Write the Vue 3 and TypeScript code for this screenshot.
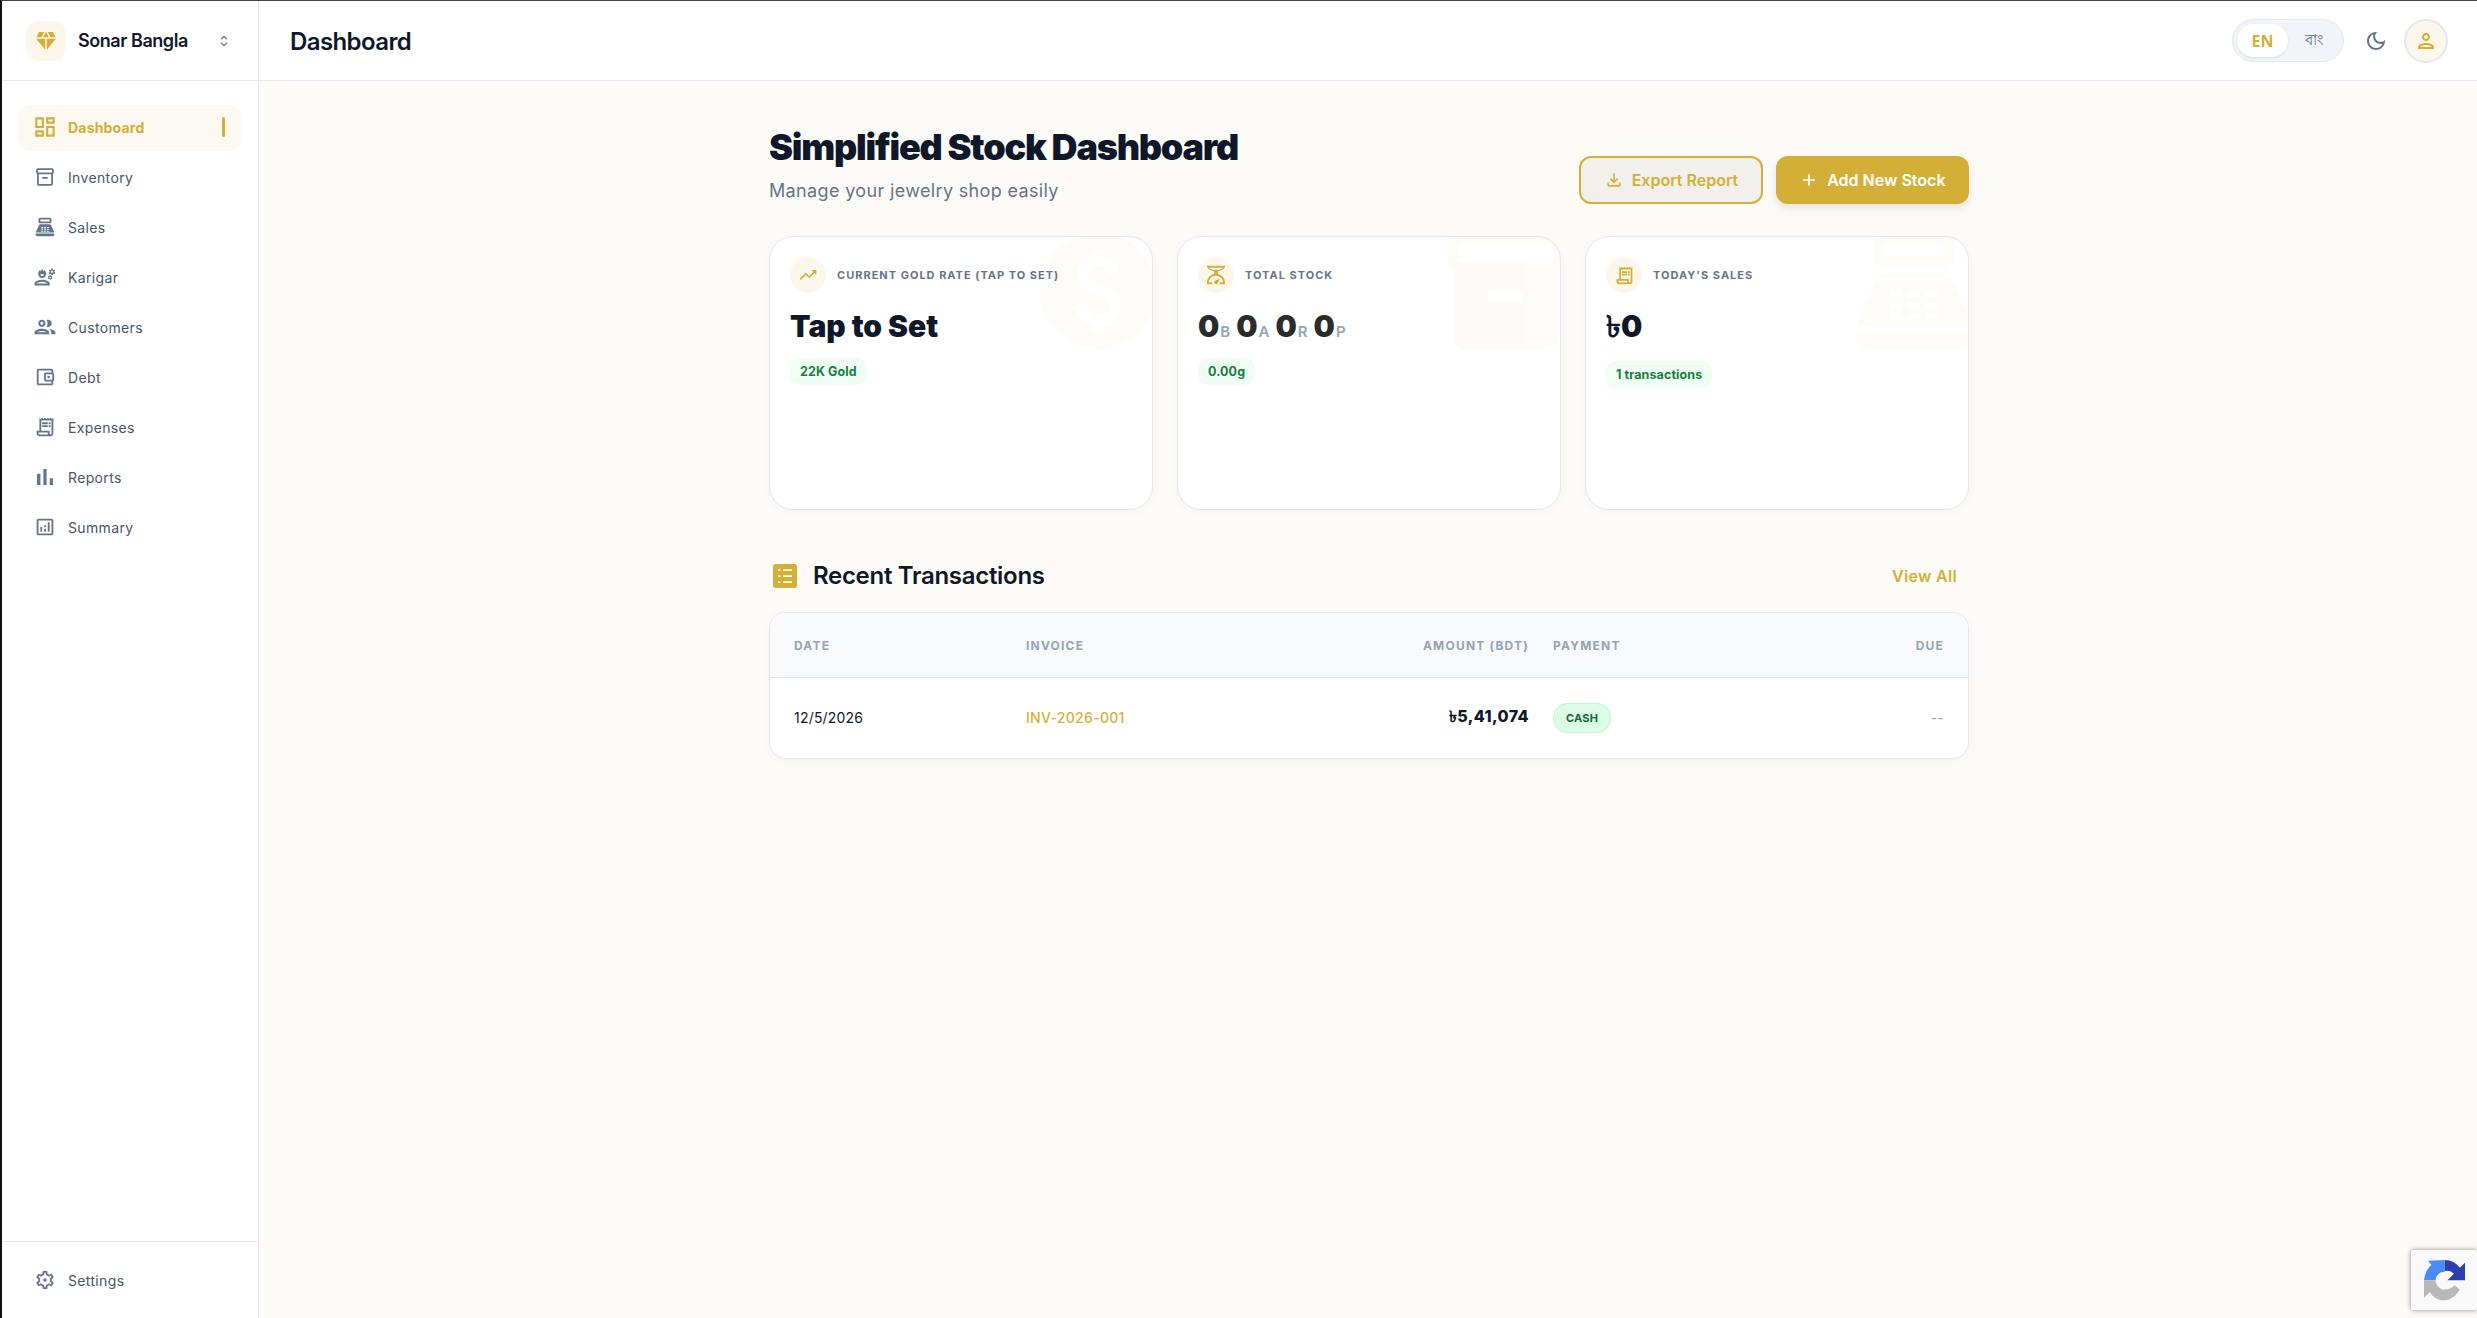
<script setup lang="ts">
interface NavItem {
  label: string
  path: string
  vb: number
  active?: boolean
}

const receiptPath = 'M19.5 3.5L18 2l-1.5 1.5L15 2l-1.5 1.5L12 2l-1.5 1.5L9 2 7.5 3.5 6 2v14H3v3c0 1.66 1.34 3 3 3h12c1.66 0 3-1.34 3-3V2l-1.5 1.5zM15 20H6c-.55 0-1-.45-1-1v-1h10v2zm4-1c0 .55-.45 1-1 1s-1-.45-1-1v-3H8V5h11v14zM9 7h6v2H9zM16 7h2v2h-2zM9 10h6v2H9zM16 10h2v2h-2z'
const posPath = 'M17 2H7c-1.1 0-2 .9-2 2v2c0 1.1.9 2 2 2h10c1.1 0 2-.9 2-2V4c0-1.1-.9-2-2-2zm0 4H7V4h10v2zm3 16H4c-1.1 0-2-.9-2-2v-1h20v1c0 1.1-.9 2-2 2zm-1.47-11.81C18.21 9.47 17.49 9 16.7 9H7.3c-.79 0-1.51.47-1.83 1.19L2 18h20l-3.47-7.81zM8 12h2v1H8zm0 2h2v1H8zm0 2h2v1H8zm3-4h2v1h-2zm0 2h2v1h-2zm0 2h2v1h-2zm3-4h2v1h-2zm0 2h2v1h-2zm0 2h2v1h-2z'

const navItems: NavItem[] = [
  { label: 'Dashboard', vb: 24, active: true, path: 'M19 5v2h-4V5h4M9 5v6H5V5h4m10 8v6h-4v-6h4M9 17v2H5v-2h4M21 3h-8v6h8V3zM11 3H3v10h8V3zm10 8h-8v10h8V11zm-10 4H3v6h8v-6z' },
  { label: 'Inventory', vb: 29.4, path: 'M20 2H4c-1 0-2 .9-2 2v3.01c0 .72.43 1.34 1 1.69V20c0 1.1 1.1 2 2 2h14c.9 0 2-1.1 2-2V8.7c.57-.35 1-.97 1-1.69V4c0-1.1-1-2-2-2zm-1 18H5V9h14v11zm1-13H4V4h16v3zM9 12h6v2H9z' },
  { label: 'Sales', vb: 27.8, path: posPath },
  { label: 'Karigar', vb: 27.6, path: 'M9 15c-2.67 0-8 1.34-8 4v2h16v-2c0-2.66-5.33-4-8-4zm-6 4c.22-.72 3.31-2 6-2 2.7 0 5.8 1.29 6 2H3zM4.74 9H5c0 2.21 1.79 4 4 4s4-1.79 4-4h.26c.27 0 .49-.22.49-.49v-.02c0-.27-.22-.49-.49-.49H13c0-1.48-.81-2.75-2-3.45v.95c0 .28-.22.5-.5.5s-.5-.22-.5-.5V4.14C9.68 4.06 9.35 4 9 4s-.68.06-1 .14V5.5c0 .28-.22.5-.5.5S7 5.78 7 5.5v-.95C5.81 5.25 5 6.52 5 8h-.26c-.27 0-.49.22-.49.49v.03c0 .26.22.48.49.48zM11 9c0 1.1-.9 2-2 2s-2-.9-2-2h4zM21.98 6.23l.93-.83-.75-1.3-1.19.39c-.14-.11-.3-.2-.47-.27L20.25 3h-1.5l-.25 1.22c-.17.07-.33.16-.48.27l-1.18-.39-.75 1.3.93.83c-.02.17-.02.35 0 .52l-.93.85.75 1.3 1.2-.38c.13.1.28.18.43.25l.28 1.23h1.5l.27-1.22c.16-.07.3-.15.44-.25l1.19.38.75-1.3-.93-.85c.03-.19.02-.36.01-.53zM19.5 7.75c-.69 0-1.25-.56-1.25-1.25s.56-1.25 1.25-1.25 1.25.56 1.25 1.25-.56 1.25-1.25 1.25zM19.4 10.79l-.85.28c-.1-.08-.21-.14-.33-.19l-.18-.88h-1.07l-.18.87c-.12.05-.24.12-.34.19l-.84-.28-.54.93.66.59c-.01.13-.01.25 0 .37l-.66.61.54.93.86-.27c.1.07.2.13.31.18l.18.88h1.07l.19-.87c.11-.05.22-.11.32-.18l.85.27.54-.93-.66-.61c.01-.13.01-.25 0-.37l.66-.59-.53-.93zM17.5 13.39c-.49 0-.89-.4-.89-.89s.4-.89.89-.89.89.4.89.89-.4.89-.89.89z' },
  { label: 'Customers', vb: 25, path: 'M9 13.75c-2.34 0-7 1.17-7 3.5V19h14v-1.75c0-2.33-4.66-3.5-7-3.5zM4.34 17c.84-.58 2.87-1.25 4.66-1.25s3.82.67 4.66 1.25H4.34zM9 12c1.93 0 3.5-1.57 3.5-3.5S10.93 5 9 5 5.5 6.57 5.5 8.5 7.07 12 9 12zm0-5c.83 0 1.5.67 1.5 1.5S9.83 10 9 10s-1.5-.67-1.5-1.5S8.17 7 9 7zm7.04 6.81c1.16.84 1.96 1.96 1.96 3.44V19h4v-1.75c0-2.02-3.5-3.17-5.96-3.44zM15 12c1.93 0 3.5-1.57 3.5-3.5S16.93 5 15 5c-.54 0-1.04.13-1.5.35.63.89 1 1.98 1 3.15s-.37 2.26-1 3.15c.46.22.96.35 1.5.35z' },
  { label: 'Debt', vb: 28.5, path: 'M21 7.28V5c0-1.1-.9-2-2-2H5c-1.11 0-2 .9-2 2v14c0 1.1.89 2 2 2h14c1.1 0 2-.9 2-2v-2.28c.59-.35 1-.98 1-1.72V9c0-.74-.41-1.37-1-1.72zM20 9v6h-7V9h7zM5 19V5h14v2h-6c-1.1 0-2 .9-2 2v6c0 1.1.9 2 2 2h6v2H5zM16 10.500a1.500 1.500 0 1 0 0 3 1.500 1.500 0 0 0 0-3z' },
  { label: 'Expenses', vb: 28, path: receiptPath },
  { label: 'Reports', vb: 22.8, path: 'M5 9.2h3V19H5zM10.600 5h2.800v14h-2.800zm5.600 8H19v6h-2.800z' },
  { label: 'Summary', vb: 28, path: 'M19 3H5c-1.100 0-2 .9-2 2v14c0 1.100.9 2 2 2h14c1.100 0 2-.9 2-2V5c0-1.100-.9-2-2-2zm0 16H5V5h14v14zM7 12h2v5H7zM15 7h2v10h-2zM11 14h2v3h-2zM11 10h2v2h-2z' },
]

const viewBox = (vb: number) => `${12 - vb / 2} ${12 - vb / 2} ${vb} ${vb}`

const settingsPath = 'M19.43 12.98c.04-.32.07-.64.07-.98 0-.34-.03-.66-.07-.98l2.11-1.65c.19-.15.24-.42.12-.64l-2-3.46c-.09-.16-.26-.25-.44-.25-.06 0-.12.01-.17.03l-2.49 1c-.52-.4-1.08-.73-1.69-.98l-.38-2.65C14.46 2.18 14.25 2 14 2h-4c-.25 0-.46.18-.49.42l-.38 2.65c-.61.25-1.17.59-1.69.98l-2.49-1c-.06-.02-.12-.03-.18-.03-.17 0-.34.09-.43.25l-2 3.46c-.13.22-.07.49.12.64l2.11 1.65c-.04.32-.07.65-.07.98 0 .33.03.66.07.98l-2.11 1.65c-.19.15-.24.42-.12.64l2 3.46c.09.16.26.25.44.25.06 0 .12-.01.17-.03l2.49-1c.52.4 1.08.73 1.69.98l.38 2.65c.03.24.24.42.49.42h4c.25 0 .46-.18.49-.42l.38-2.65c.61-.25 1.17-.59 1.69-.98l2.49 1c.06.02.12.03.18.03.17 0 .34-.09.43-.25l2-3.46c.12-.22.07-.49-.12-.64l-2.11-1.65zm-1.98-1.71c.04.31.05.52.05.73 0 .21-.02.43-.05.73l-.14 1.13.89.7 1.08.84-.7 1.21-1.27-.51-1.04-.42-.9.68c-.43.32-.84.56-1.25.73l-1.06.43-.16 1.13-.2 1.35h-1.4l-.19-1.35-.16-1.13-1.06-.43c-.43-.18-.83-.41-1.23-.71l-.91-.7-1.06.43-1.27.51-.7-1.21 1.08-.84.89-.7-.14-1.13c-.03-.31-.05-.54-.05-.74s.02-.43.05-.73l.14-1.13-.89-.7-1.08-.84.7-1.21 1.27.51 1.04.42.9-.68c.43-.32.84-.56 1.25-.73l1.06-.43.16-1.13.2-1.35h1.39l.19 1.35.16 1.13 1.06.43c.43.18.83.41 1.23.71l.91.7 1.06-.43 1.27-.51.7 1.21-1.07.85-.89.7.14 1.13zM12 10a2 2 0 1 0 0 4 2 2 0 0 0 0-4z'
const diamondPath = 'M12.16 3h-.32L9.21 8.25h5.58zM16.46 8.25h5.16L19 3h-5.16zM22 9.75H12.75V20.8zM11.25 20.8V9.75H2zM7.54 8.25L10.16 3H5L2.38 8.25z'
const moonPath = 'M9.37 5.51c-.18.64-.27 1.31-.27 1.99 0 4.08 3.32 7.4 7.4 7.4.68 0 1.35-.09 1.99-.27C17.45 17.19 14.93 19 12 19c-3.86 0-7-3.14-7-7 0-2.93 1.81-5.45 3.51-6.49zM12 3c-4.97 0-9 4.03-9 9s4.03 9 9 9 9-4.03 9-9c0-.46-.04-.92-.1-1.36-.98 1.37-2.58 2.26-4.4 2.26-2.98 0-5.4-2.42-5.4-5.4 0-1.81.89-3.42 2.26-4.4-.44-.06-.9-.1-1.36-.1z'
const personPath = 'M12 6c1.1 0 2 .9 2 2s-.9 2-2 2-2-.9-2-2 .9-2 2-2m0 10c2.7 0 5.8 1.29 6 2H6c.23-.72 3.31-2 6-2m0-12C9.79 4 8 5.79 8 8s1.79 4 4 4 4-1.79 4-4-1.79-4-4-4zm0 10c-2.67 0-8 1.34-8 4v2h16v-2c0-2.66-5.33-4-8-4z'
const trendPath = 'M16 6l2.29 2.29-4.88 4.88-4-4L2 16.59 3.41 18l6-6 4 4 6.3-6.29L22 12V6z'
const scalePath = 'M14 11V8c4.56-.58 8-3.1 8-6H2c0 2.9 3.44 5.42 8 6v3c-3.68.73-8 3.61-8 11h6v-2H4.13c.93-6.83 6.65-7.2 7.87-7.2s6.94.37 7.87 7.2H16v2h6c0-7.39-4.32-10.27-8-11zM4.600 4h14.800c-.9 1.600-3.600 2.500-7.400 2.500S5.500 5.600 4.600 4zM12 22c-1.1 0-2-.9-2-2 0-.55.22-1.05.59-1.41C11.39 17.79 16 16 16 16s-1.79 4.61-2.59 5.41c-.36.37-.86.59-1.41.59z'
const paidPath = 'M12 2C6.48 2 2 6.48 2 12s4.48 10 10 10 10-4.48 10-10S17.52 2 12 2zm.88 15.76V19h-1.75v-1.29c-.74-.18-2.39-.77-3.02-2.96l1.65-.67c.06.22.58 2.09 2.4 2.09.93 0 1.98-.48 1.98-1.61 0-.96-.7-1.46-2.28-2.03-1.1-.39-3.35-1.03-3.35-3.31 0-.1.01-2.4 2.62-2.96V5h1.75v1.24c1.84.32 2.51 1.79 2.66 2.23l-1.58.67c-.11-.35-.59-1.34-1.9-1.34-.7 0-1.81.37-1.81 1.39 0 .95.86 1.31 2.64 1.9 2.4.83 3.01 2.05 3.01 3.45 0 2.63-2.5 3.13-3.02 3.22z'
const inventoryFill = 'M20 2H4c-1 0-2 .9-2 2v3.01c0 .72.43 1.34 1 1.69V20c0 1.1 1.1 2 2 2h14c.9 0 2-1.1 2-2V8.7c.57-.35 1-.97 1-1.69V4c0-1.1-1-2-2-2zm-5 12H9v-2h6v2zm5-7H4V4h16v3z'

interface StatCard {
  label: string
  icon: string
  iconClass: string
  bgPath: string
  badge: string
}

const cards: StatCard[] = [
  { label: 'Current Gold Rate (Tap to Set)', icon: trendPath, iconClass: 'ic-trend', bgPath: paidPath, badge: '22K Gold' },
  { label: 'Total Stock', icon: scalePath, iconClass: 'ic-scale', bgPath: inventoryFill, badge: '0.00g' },
  { label: "Today's Sales", icon: receiptPath, iconClass: 'ic-receipt', bgPath: posPath, badge: '1 transactions' },
]

const stockParts = [
  { value: '0', unit: 'B' },
  { value: '0', unit: 'A' },
  { value: '0', unit: 'R' },
  { value: '0', unit: 'P' },
]
</script>

<template>
  <div class="shell">
    <aside class="sidebar">
      <div class="brand">
        <span class="brand-logo">
          <svg viewBox="0 0 24 24" class="logo-svg"><path :d="diamondPath" /></svg>
        </span>
        <span class="brand-name">Sonar Bangla</span>
        <svg viewBox="0 0 24 24" class="unfold"><path d="M7 9l5-5 5 5M7 15l5 5 5-5" /></svg>
      </div>
      <nav class="nav">
        <a v-for="item in navItems" :key="item.label" class="nav-item" :class="{ active: item.active }">
          <svg :viewBox="viewBox(item.vb)" class="nav-icon"><path :d="item.path" fill-rule="evenodd" /></svg>
          <span>{{ item.label }}</span>
          <i v-if="item.active" class="nav-bar"></i>
        </a>
      </nav>
      <div class="sidebar-foot">
        <a class="nav-item">
          <svg :viewBox="viewBox(28.9)" class="nav-icon"><path :d="settingsPath" fill-rule="evenodd" /></svg>
          <span>Settings</span>
        </a>
      </div>
    </aside>

    <div class="main">
      <header class="topbar">
        <h2 class="page-name">Dashboard</h2>
        <div class="top-actions">
          <div class="lang">
            <span class="lang-on">EN</span>
            <span class="lang-off">বাং</span>
          </div>
          <svg viewBox="0 0 24 24" class="moon"><path :d="moonPath" fill-rule="evenodd" /></svg>
          <span class="avatar">
            <svg viewBox="0 0 24 24"><path :d="personPath" /></svg>
          </span>
        </div>
      </header>

      <main class="content">
        <div class="wrap">
          <div class="head-row">
            <div>
              <h1 class="title">Simplified Stock Dashboard</h1>
              <p class="subtitle">Manage your jewelry shop easily</p>
            </div>
            <div class="head-btns">
              <button class="btn btn-outline">
                <svg viewBox="0 0 24 24"><path d="M18 15v3H6v-3H4v3c0 1.1.9 2 2 2h12c1.1 0 2-.9 2-2v-3h-2zm-1-4l-1.41-1.41L13 12.17V4h-2v8.17L8.41 9.59 7 11l5 5 5-5z" /></svg>
                Export Report
              </button>
              <button class="btn btn-solid">
                <svg viewBox="0 0 24 24"><path d="M19 13h-6v6h-2v-6H5v-2h6V5h2v6h6v2z" /></svg>
                Add New Stock
              </button>
            </div>
          </div>

          <section class="cards">
            <article v-for="(card, i) in cards" :key="card.label" class="card">
              <svg viewBox="0 0 24 24" class="card-bg"><path :d="card.bgPath" fill-rule="evenodd" /></svg>
              <div class="card-head">
                <span class="card-icon">
                  <svg viewBox="0 0 24 24" :class="card.iconClass"><path :d="card.icon" fill-rule="evenodd" /></svg>
                </span>
                <span class="card-label">{{ card.label }}</span>
              </div>
              <div v-if="i === 0" class="card-value">Tap to Set</div>
              <div v-else-if="i === 1" class="card-value stock">
                <span v-for="p in stockParts" :key="p.unit" class="part">{{ p.value }}<small>{{ p.unit }}</small></span>
              </div>
              <div v-else class="card-value"><span class="taka" lang="bn">৳</span>0</div>
              <span class="badge" :class="{ lower: i === 2 }">{{ card.badge }}</span>
            </article>
          </section>

          <div class="section-head">
            <div class="section-title">
              <svg viewBox="0 0 24 24" class="list-icon">
                <rect width="24" height="24" rx="2.5" fill="#d4af37" />
                <path d="M5 5.200h2.300v1.700H5zM10 5.200h9v1.700h-9zM5 11.200h2.300v1.700H5zM10 11.200h9v1.700h-9zM5 17.200h2.300v1.700H5zM10 17.200h9v1.700h-9z" fill="#fff" opacity=".92" />
              </svg>
              <h3>Recent Transactions</h3>
            </div>
            <a class="view-all">View All</a>
          </div>

          <div class="table-card">
            <table>
              <colgroup>
                <col class="col-date" />
                <col class="col-inv" />
                <col class="col-amt" />
                <col />
                <col class="col-due" />
              </colgroup>
              <thead>
                <tr>
                  <th>Date</th>
                  <th>Invoice</th>
                  <th class="right tight">Amount (BDT)</th>
                  <th>Payment</th>
                  <th class="right">Due</th>
                </tr>
              </thead>
              <tbody>
                <tr>
                  <td class="date">12/5/2026</td>
                  <td class="inv">INV-2026-001</td>
                  <td class="right tight amount"><span class="taka" lang="bn">৳</span>5,41,074</td>
                  <td><span class="cash">CASH</span></td>
                  <td class="right due">--</td>
                </tr>
              </tbody>
            </table>
          </div>
        </div>
      </main>
    </div>

    <div class="recaptcha">
      <svg viewBox="143 95 122 122" width="41" height="41">
        <path d="M205 95A60 60 0 0 1 250 118L265 103V155H213L232 136A27 27 0 0 0 205 128Z" fill="#2b3fae" />
        <path d="M205 95V130C190 130 180 140 177 155H143C146 135 152 122 165 110L155 97Z" fill="#4a8af4" />
        <path d="M143 155H177C178 170 190 183 205 183C218 183 228 177 233 170L250 183C240 200 222 215 205 215C185 215 170 207 160 190L143 207Z" fill="#b8b8b8" />
      </svg>
    </div>
  </div>
</template>

<style>
html,
body {
  margin: 0;
  background: #fcfbf7;
}
</style>

<style scoped>
.shell {
  display: flex;
  height: 1318px;
  box-sizing: border-box;
  border-top: 1px solid #444;
  border-left: 2px solid #111;
  font-family: Inter, 'Noto Sans', sans-serif;
  color: #0f172a;
  overflow: hidden;
}

.sidebar {
  width: 256px;
  flex: none;
  background: #fff;
  border-right: 1px solid #e2e8f0;
  display: flex;
  flex-direction: column;
}

.brand {
  height: 80px;
  flex: none;
  box-sizing: border-box;
  border-bottom: 1px solid #e2e8f0;
  display: flex;
  align-items: center;
  padding: 0 27px 0 24px;
}

.brand-logo {
  width: 40px;
  height: 40px;
  border-radius: 12px;
  background: #fbf7ea;
  display: grid;
  place-items: center;
  flex: none;
}

.logo-svg {
  width: 24px;
  height: 24px;
  fill: #d4af37;
}

.brand-name {
  margin-left: 12px;
  font-size: 18px;
  font-weight: 600;
  letter-spacing: -0.45px;
  flex: 1;
}

.unfold {
  width: 14px;
  height: 16px;
  fill: none;
  stroke: #64748b;
  stroke-width: 2;
}

.nav {
  padding: 24px 16px;
  display: flex;
  flex-direction: column;
  gap: 4px;
  flex: 1;
}

.nav-item {
  display: flex;
  align-items: center;
  height: 46px;
  box-sizing: border-box;
  padding: 0 14px 2px;
  gap: 10px;
  border-radius: 14px;
  color: #475569;
  font-size: 14px;
  font-weight: 400;
  letter-spacing: 0.35px;
}

.nav-icon {
  width: 26px;
  height: 26px;
  fill: #64748b;
  flex: none;
}

.nav-item.active {
  background: #fbf9f2;
  color: #d4af37;
  font-weight: 700;
  letter-spacing: 0.2px;
}

.nav-item.active .nav-icon {
  fill: #d4af37;
}

.nav-bar {
  width: 3px;
  height: 20px;
  background: #d4af37;
  border-radius: 2px;
  margin-left: auto;
  margin-right: 3px;
}

.sidebar-foot {
  border-top: 1px solid #e2e8f0;
  padding: 16px 16px 14px;
}

.main {
  flex: 1;
  min-width: 0;
  display: flex;
  flex-direction: column;
}

.topbar {
  height: 80px;
  flex: none;
  box-sizing: border-box;
  background: #fff;
  border-bottom: 1px solid #e2e8f0;
  display: flex;
  align-items: center;
  justify-content: space-between;
  padding: 0 29px 0 31px;
}

.page-name {
  margin: 2px 0 0;
  font-size: 24px;
  font-weight: 600;
  letter-spacing: -0.6px;
}

.top-actions {
  display: flex;
  align-items: center;
}

.lang {
  display: flex;
  align-items: center;
  width: 112px;
  height: 43px;
  box-sizing: border-box;
  padding: 4px;
  border-radius: 22px;
  background: #f1f5f9;
  border: 1px solid #e2e8f0;
  font-family: 'Noto Sans', Inter, sans-serif;
  font-size: 16px;
  font-weight: 700;
}

.lang-on {
  width: 51px;
  height: 33px;
  border-radius: 17px;
  background: #fff;
  color: #d4af37;
  box-shadow: 0 1px 3px rgba(0, 0, 0, 0.1);
  display: grid;
  place-items: center;
}

.lang-off {
  flex: 1;
  text-align: center;
  color: #64748b;
  font-weight: 500;
  font-size: 15px;
}

.moon {
  width: 24px;
  height: 24px;
  fill: #64748b;
  margin-left: 20px;
}

.avatar {
  width: 44px;
  height: 44px;
  box-sizing: border-box;
  border-radius: 50%;
  background: #fbf7ea;
  border: 2px solid #e2e8f0;
  display: grid;
  place-items: center;
  margin-left: 16px;
}

.avatar svg {
  width: 24px;
  height: 24px;
  fill: #d4af37;
}

.content {
  flex: 1;
  box-sizing: border-box;
  padding: 43px 0 0 2px;
  background: #fcfbf7;
}

.wrap {
  width: 1200px;
  margin: 0 auto;
}

.head-row {
  display: flex;
  justify-content: space-between;
  align-items: flex-end;
}

.title {
  margin: 0;
  font-size: 36px;
  font-weight: 900;
  line-height: 46px;
  letter-spacing: -1.2px;
}

.subtitle {
  margin: 7px 0 0;
  font-size: 18px;
  line-height: 28px;
  letter-spacing: 0.35px;
  color: #64748b;
}

.head-btns {
  display: flex;
  gap: 13px;
  margin-bottom: 1px;
}

.btn {
  height: 48px;
  box-sizing: border-box;
  border-radius: 12px;
  font-family: inherit;
  font-size: 16px;
  font-weight: 600;
  display: flex;
  align-items: center;
  gap: 8px;
}

.btn svg {
  width: 20px;
  height: 20px;
  fill: currentColor;
}

.btn-outline {
  padding: 0 22.5px;
  background: #f1f0ec;
  border: 2px solid #d4af37;
  color: #d4af37;
}

.btn-solid {
  padding: 0 23.5px;
  background: #d4af37;
  border: 0;
  color: #fff;
  box-shadow: 0 4px 10px rgba(0, 0, 0, 0.1);
}

.cards {
  display: grid;
  grid-template-columns: repeat(3, 1fr);
  gap: 24px;
  margin-top: 31px;
}

.card {
  position: relative;
  height: 274px;
  box-sizing: border-box;
  overflow: hidden;
  background: #fff;
  border: 1px solid #e2e8f0;
  border-radius: 24px;
  padding: 20px;
  box-shadow: 0 2px 8px rgba(0, 0, 0, 0.03);
}

.card-bg {
  position: absolute;
  top: -16px;
  right: -16px;
  width: 140px;
  height: 140px;
  fill: #d4af37;
  opacity: 0.035;
}

.card-head {
  display: flex;
  align-items: center;
  gap: 11px;
  height: 36px;
}

.card-icon {
  width: 36px;
  height: 36px;
  border-radius: 50%;
  background: #fbf7ea;
  display: grid;
  place-items: center;
  color: #d4af37;
  flex: none;
}

.ic-trend {
  width: 20px;
  height: 20px;
  fill: currentColor;
}

.ic-scale {
  width: 22px;
  height: 22px;
  fill: currentColor;
}

.ic-receipt {
  width: 21px;
  height: 21px;
  fill: currentColor;
}

.card-label {
  font-size: 11px;
  font-weight: 700;
  letter-spacing: 1px;
  text-transform: uppercase;
  color: #64748b;
}

.card-value {
  margin-top: 15px;
  height: 36px;
  font-size: 30px;
  font-weight: 900;
  line-height: 36px;
}

.stock {
  display: flex;
  gap: 6px;
  color: #2b2b2b;
}

.part small {
  font-size: 15px;
  font-weight: 600;
  color: #94a3b8;
  margin-left: 1px;
}

/* the sign looks wider in the reference than Inter's one, so leave it to the system fallback */
.taka {
  font-family: 'Noto Sans', sans-serif;
}

.badge {
  display: inline-block;
  margin-top: 14px;
  padding: 0 10px;
  height: 27px;
  line-height: 27px;
  border-radius: 10px;
  background: #f0fdf4;
  color: #15803d;
  font-size: 12.5px;
  font-weight: 700;
  letter-spacing: 0.1px;
}

.badge.lower {
  margin-top: 17px;
}

.section-head {
  display: flex;
  align-items: center;
  justify-content: space-between;
  margin-top: 51px;
  padding: 0 12px 0 4px;
}

.section-title {
  display: flex;
  align-items: center;
  gap: 16px;
}

.list-icon {
  width: 24px;
  height: 24px;
}

.section-title h3 {
  margin: 0;
  font-size: 24px;
  font-weight: 600;
  letter-spacing: -0.3px;
}

.view-all {
  color: #d4af37;
  font-size: 16px;
  font-weight: 600;
  letter-spacing: 0.3px;
}

.table-card {
  margin-top: 22px;
  background: #fff;
  border: 1px solid #e2e8f0;
  border-radius: 16px;
  overflow: hidden;
  box-shadow: 0 2px 8px rgba(0, 0, 0, 0.03);
}

table {
  width: 100%;
  border-collapse: collapse;
  table-layout: fixed;
}

.col-date {
  width: 232px;
}

.col-inv {
  width: 300px;
}

.col-amt {
  width: 227px;
}

.col-due {
  width: 160px;
}

th {
  height: 64px;
  padding: 0 24px;
  background: #f8fafc;
  border-bottom: 1px solid #e2e8f0;
  text-align: left;
  font-size: 12px;
  font-weight: 700;
  letter-spacing: 1.2px;
  text-transform: uppercase;
  color: #94a3b8;
}

td {
  height: 79px;
  padding: 0 24px 1px;
  font-size: 14px;
  letter-spacing: 0.2px;
  color: #0f172a;
}

th.right,
td.right {
  text-align: right;
}

th.tight,
td.tight {
  padding-right: 0;
}

.inv {
  color: #d4af37;
  font-weight: 500;
  letter-spacing: 0.3px;
}

td.amount {
  font-size: 16px;
  font-weight: 800;
  letter-spacing: 0.4px;
}

.cash {
  display: inline-block;
  height: 30px;
  line-height: 28px;
  box-sizing: border-box;
  padding: 0 12px;
  border-radius: 14px;
  background: #dcfce7;
  border: 1px solid #bbf7d0;
  color: #166534;
  font-size: 11px;
  font-weight: 700;
}

td.due {
  color: #94a3b8;
}

.recaptcha {
  position: fixed;
  right: 0;
  bottom: 8px;
  width: 66px;
  height: 60px;
  background: #f9f9f9;
  border-radius: 2px;
  box-shadow: 0 0 5px rgba(0, 0, 0, 0.45);
  display: grid;
  place-items: center;
}
</style>
